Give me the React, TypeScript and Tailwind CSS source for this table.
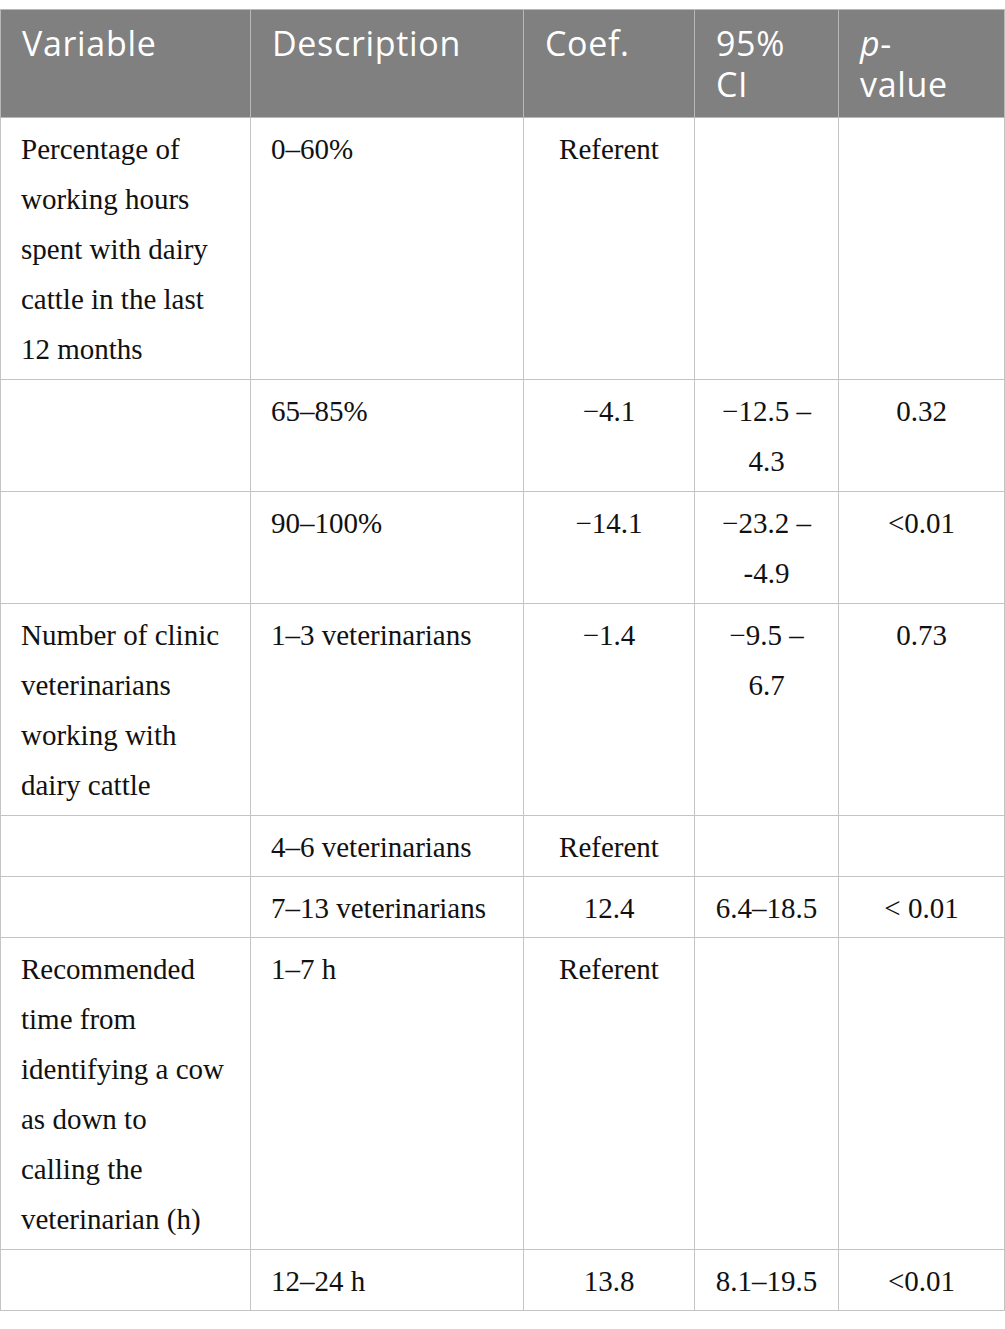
import React from 'react';

type Row = {
  variable: string[];
  description: string;
  coef: string;
  ci: string[];
  p: string;
};

const rows: Row[] = [
  {
    variable: ['Percentage of', 'working hours', 'spent with dairy', 'cattle in the last', '12 months'],
    description: '0–60%',
    coef: 'Referent',
    ci: [],
    p: '',
  },
  { variable: [], description: '65–85%', coef: '−4.1', ci: ['−12.5 –', '4.3'], p: '0.32' },
  { variable: [], description: '90–100%', coef: '−14.1', ci: ['−23.2 –', '-4.9'], p: '<0.01' },
  {
    variable: ['Number of clinic', 'veterinarians', 'working with', 'dairy cattle'],
    description: '1–3 veterinarians',
    coef: '−1.4',
    ci: ['−9.5 –', '6.7'],
    p: '0.73',
  },
  { variable: [], description: '4–6 veterinarians', coef: 'Referent', ci: [], p: '' },
  { variable: [], description: '7–13 veterinarians', coef: '12.4', ci: ['6.4–18.5'], p: '< 0.01' },
  {
    variable: ['Recommended', 'time from', 'identifying a cow', 'as down to', 'calling the', 'veterinarian (h)'],
    description: '1–7 h',
    coef: 'Referent',
    ci: [],
    p: '',
  },
  { variable: [], description: '12–24 h', coef: '13.8', ci: ['8.1–19.5'], p: '<0.01' },
];

const Lines = ({ lines }: { lines: string[] }) => (
  <>
    {lines.map((l, i) => (
      <div key={i} className="whitespace-nowrap">
        {l}
      </div>
    ))}
  </>
);

const th = 'border border-[#b8b8b8] px-[21px] pt-[13px] pb-[12px] text-left align-top font-normal';

export default function App() {
  return (
    <div className="bg-white pt-[9px]">
      <table
        className="w-[1004px] table-fixed border-collapse"
        style={{ fontFamily: '"Liberation Serif", "Times New Roman", serif' }}
      >
        <colgroup>
          <col className="w-[250px]" />
          <col className="w-[273px]" />
          <col className="w-[171px]" />
          <col className="w-[144px]" />
          <col className="w-[166px]" />
        </colgroup>
        <thead>
          <tr
            className="bg-[#808080] text-white text-[34px] leading-[41px] tracking-[0.02em]"
            style={{ fontFamily: '"Open Sans", "Liberation Sans", sans-serif' }}
          >
            <th className={th}>Variable</th>
            <th className={th}>Description</th>
            <th className={th}>Coef.</th>
            <th className={th}>
              95%
              <br />
              CI
            </th>
            <th className={th}>
              <span className="italic">p</span>-
              <br />
              value
            </th>
          </tr>
        </thead>
        <tbody className="text-[29px] leading-[50px] text-[#111111]">
          {rows.map((r, i) => {
            const single = r.variable.length < 2 && r.ci.length < 2;
            const td = `border border-[#c4c4c4] px-[20px] pt-[6px] align-top ${single ? 'pb-[4px]' : 'pb-[5px]'}`;
            return (
              <tr key={i}>
                <td className={td}>
                  <Lines lines={r.variable} />
                </td>
                <td className={td}>
                  <span className="whitespace-nowrap">{r.description}</span>
                </td>
                <td className={`${td} text-center`}>{r.coef}</td>
                <td className={`${td} text-center px-[10px]`}>
                  <Lines lines={r.ci} />
                </td>
                <td className={`${td} text-center`}>
                  <span className="whitespace-nowrap">{r.p}</span>
                </td>
              </tr>
            );
          })}
        </tbody>
      </table>
    </div>
  );
}
